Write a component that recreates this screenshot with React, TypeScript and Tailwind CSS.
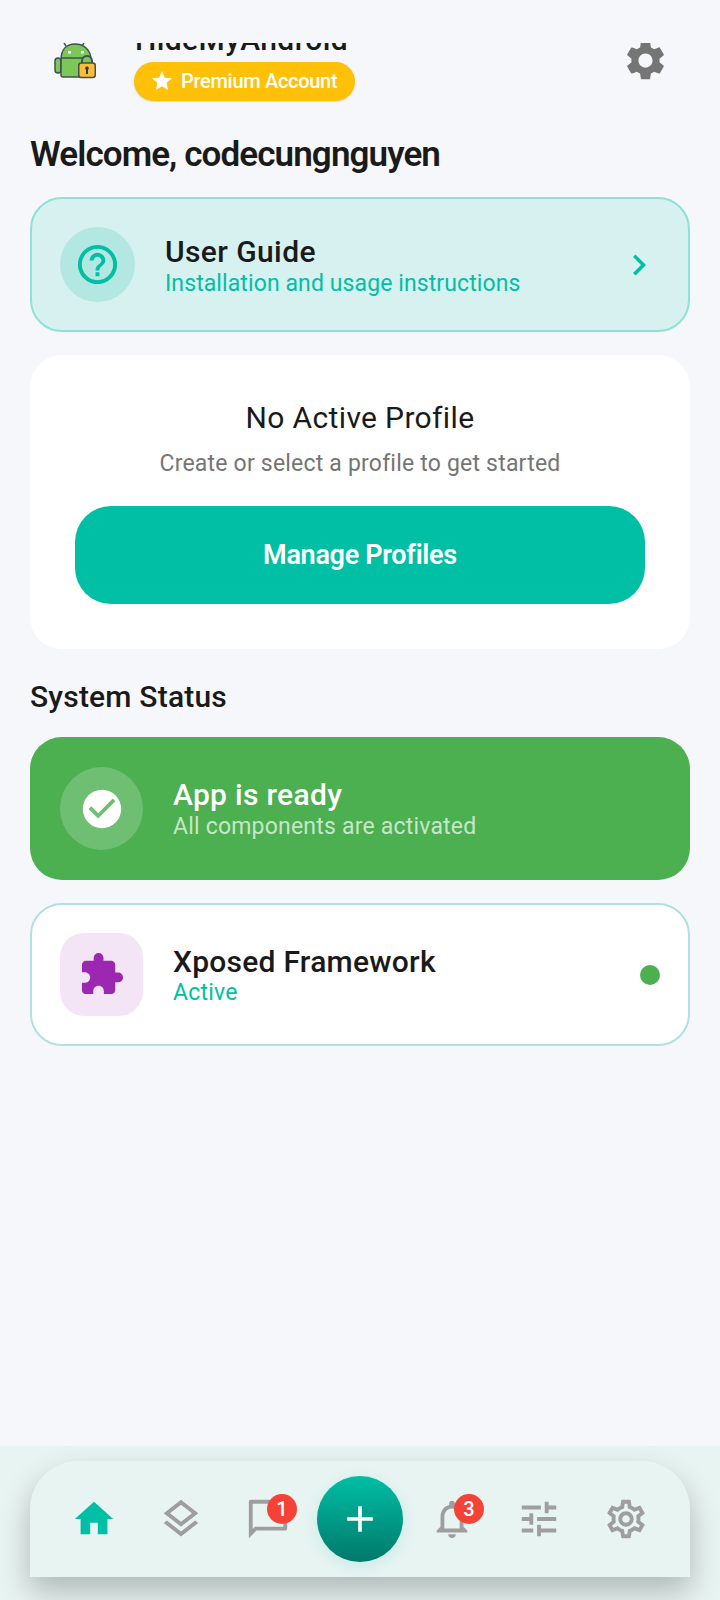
import type { ReactNode } from "react";
import {
  MdAdd,
  MdCheckCircle,
  MdChevronRight,
  MdExtension,
  MdHelpOutline,
  MdHome,
  MdOutlineLayers,
  MdOutlineNotifications,
  MdOutlineSettings,
  MdSettings,
  MdStar,
  MdTune,
} from "react-icons/md";

function Logo() {
  return (
    <svg width="44" height="36" viewBox="0 0 44 36" className="shrink-0">
      <path d="M12 3 10 0M28 3l2-3" stroke="#42504f" strokeWidth="1.500" />
      <rect x="1" y="15" width="6" height="15" rx="3" fill="#7bc75a" stroke="#42504f" strokeWidth="1.500" />
      <path
        d="M7 32V17C7 7 12 1 21 1s16 6 16 16v16a1 1 0 0 1-1 1H9a2 2 0 0 1-2-2Z"
        fill="#7bc75a"
        stroke="#42504f"
        strokeWidth="1.500"
      />
      <path d="M7 15h22" stroke="#42504f" strokeWidth="1.500" />
      <rect x="14" y="8" width="3" height="2.500" fill="#fff" />
      <rect x="27" y="8" width="3" height="2.500" fill="#fff" />
      <path d="M28 20v-2a5 5 0 0 1 10 0v2" fill="#7bc75a" stroke="#42504f" strokeWidth="2" />
      <rect x="24.750" y="20" width="16.500" height="14.500" rx="2.500" fill="#fdbd39" stroke="#42504f" strokeWidth="1.500" />
      <path d="M33 23.500a1.800 1.800 0 0 1 1 3.300V31h-2v-4.200a1.800 1.800 0 0 1 1-3.300Z" fill="#2f3a3a" />
    </svg>
  );
}

function ChatIcon() {
  return (
    <svg width="46" height="46" viewBox="0 0 24 24" fill="currentColor">
      <path
        fillRule="evenodd"
        d="M3 2h18a1 1 0 0 1 1 1v14a1 1 0 0 1-1 1H6l-4 4V3a1 1 0 0 1 1-1Zm1 2v13.200L5.200 16H20V4H4Z"
      />
    </svg>
  );
}

function NavIcon({ children, badge, badgeClass }: { children: ReactNode; badge?: string; badgeClass?: string }) {
  return (
    <div className="relative flex h-[87px] w-[87px] items-center justify-center text-[#9e9e9e]">
      {children}
      {badge && (
        <span
          className={`absolute top-[18px] flex h-[30px] w-[30px] items-center justify-center rounded-full bg-[#f44336] text-[20px] leading-none font-medium text-white ${badgeClass}`}
        >
          {badge}
        </span>
      )}
    </div>
  );
}

export default function App() {
  return (
    <div className="flex h-[1600px] flex-col overflow-hidden bg-[#f5f7fb] font-['Roboto',sans-serif] text-[#1a1a1a]">
      <main className="flex-1 px-[30px] pt-[43px]">
        {/* header is cut off at the top in the original too */}
        <div className="flex h-[59px] items-start overflow-hidden">
          <div className="ml-[24px] w-[80px]">
            <Logo />
          </div>
          <div className="-mt-[22px] flex flex-col items-start">
            <span className="pl-[1px] text-[30px] leading-[38px] font-medium tracking-[0.4px]">HideMyAndroid</span>
            <span className="mt-[3px] flex h-[39px] w-[221px] items-center rounded-full bg-[#ffc107] pb-[1px] pl-[16px] text-[20px] font-medium tracking-[-0.3px] text-white shadow-sm">
              <MdStar size={24} className="mr-[7px]" />
              Premium Account
            </span>
          </div>
          <MdSettings size={47} className="-mt-[6px] mr-[21px] ml-auto text-[#757575]" />
        </div>

        <h1 className="mt-[30px] text-[35px] leading-[46px] font-semibold tracking-[-0.9px]">Welcome, codecungnguyen</h1>

        <section className="mt-[19px] flex h-[135px] items-center rounded-[32px] border-2 border-[#8ee1d6] bg-[#d6f1ef] pr-[28px] pl-[28px]">
          <div className="flex h-[75px] w-[75px] items-center justify-center rounded-full bg-[#b2e8e1] text-[#00bfa5]">
            <MdHelpOutline size={47} />
          </div>
          <div className="ml-[30px] flex-1">
            <div className="pt-[1px] text-[30px] leading-[36px] font-medium tracking-[0.4px]">User Guide</div>
            <div className="text-[23px] leading-[27px] tracking-[0.1px] text-[#00bfa5]">Installation and usage instructions</div>
          </div>
          <MdChevronRight size={42} className="text-[#00bfa5]" />
        </section>

        <section className="mt-[23px] flex h-[294px] flex-col items-center rounded-[32px] bg-white px-[45px]">
          <div className="mt-[44px] text-[30px] leading-[38px] font-[450] tracking-[0.35px]">No Active Profile</div>
          <div className="mt-[12px] text-[23px] leading-[30px] tracking-[0.2px] text-[#757575]">Create or select a profile to get started</div>
          <button className="mt-[27px] h-[98px] w-full rounded-[36px] bg-[#00bfa5] pt-[1px] text-[27px] font-semibold tracking-[-0.3px] text-white">Manage Profiles</button>
        </section>

        <h2 className="mt-[28px] text-[30px] leading-[40px] font-medium tracking-[0.2px]">System Status</h2>

        <section className="mt-[20px] flex h-[143px] items-center rounded-[32px] bg-[#4caf50] px-[30px] text-white">
          <div className="flex h-[83px] w-[83px] items-center justify-center rounded-full bg-white/20">
            <MdCheckCircle size={46} />
          </div>
          <div className="ml-[30px]">
            <div className="text-[30px] leading-[36px] font-medium tracking-[0.3px]">App is ready</div>
            <div className="text-[23px] leading-[28px] tracking-[0.2px] text-white/70">All components are activated</div>
          </div>
        </section>

        <section className="mt-[23px] flex h-[143px] items-center rounded-[32px] border-2 border-[#b2e0dd] bg-white pr-[28px] pl-[28px]">
          <div className="flex h-[83px] w-[83px] items-center justify-center rounded-[24px] bg-[#f3e5f5] text-[#9c27b0]">
            <MdExtension size={47} />
          </div>
          <div className="ml-[30px] flex-1">
            <div className="text-[30px] leading-[36px] font-medium tracking-[0.25px]">Xposed Framework</div>
            <div className="text-[23px] leading-[26px] tracking-[0.2px] text-[#00bfa5]">Active</div>
          </div>
          <div className="h-[20px] w-[20px] rounded-full bg-[#4caf50]" />
        </section>
      </main>

      <nav className="h-[154px] shrink-0 bg-[#e8f4f2] px-[30px] pt-[15px]">
        <div className="flex h-[116px] items-center rounded-t-[48px] bg-[#e8f4f2] pl-[20px] shadow-[0_14px_30px_rgba(0,0,0,0.25)]">
          <NavIcon>
            <MdHome size={46} className="text-[#00bfa5]" />
          </NavIcon>
          <NavIcon>
            <MdOutlineLayers size={46} />
          </NavIcon>
          <NavIcon badge="1" badgeClass="right-[14px]">
            <ChatIcon />
          </NavIcon>
          <button className="mr-[5px] ml-[6px] flex h-[86px] w-[86px] shrink-0 items-center justify-center rounded-full bg-gradient-to-b from-[#00bfa5] to-[#00796b] text-white shadow-[0_4px_16px_rgba(0,191,165,0.15)]">
            <MdAdd size={44} />
          </button>
          <NavIcon badge="3" badgeClass="right-[11px]">
            <MdOutlineNotifications size={46} />
          </NavIcon>
          <NavIcon>
            <MdTune size={46} />
          </NavIcon>
          <NavIcon>
            <MdOutlineSettings size={46} />
          </NavIcon>
        </div>
      </nav>
    </div>
  );
}
